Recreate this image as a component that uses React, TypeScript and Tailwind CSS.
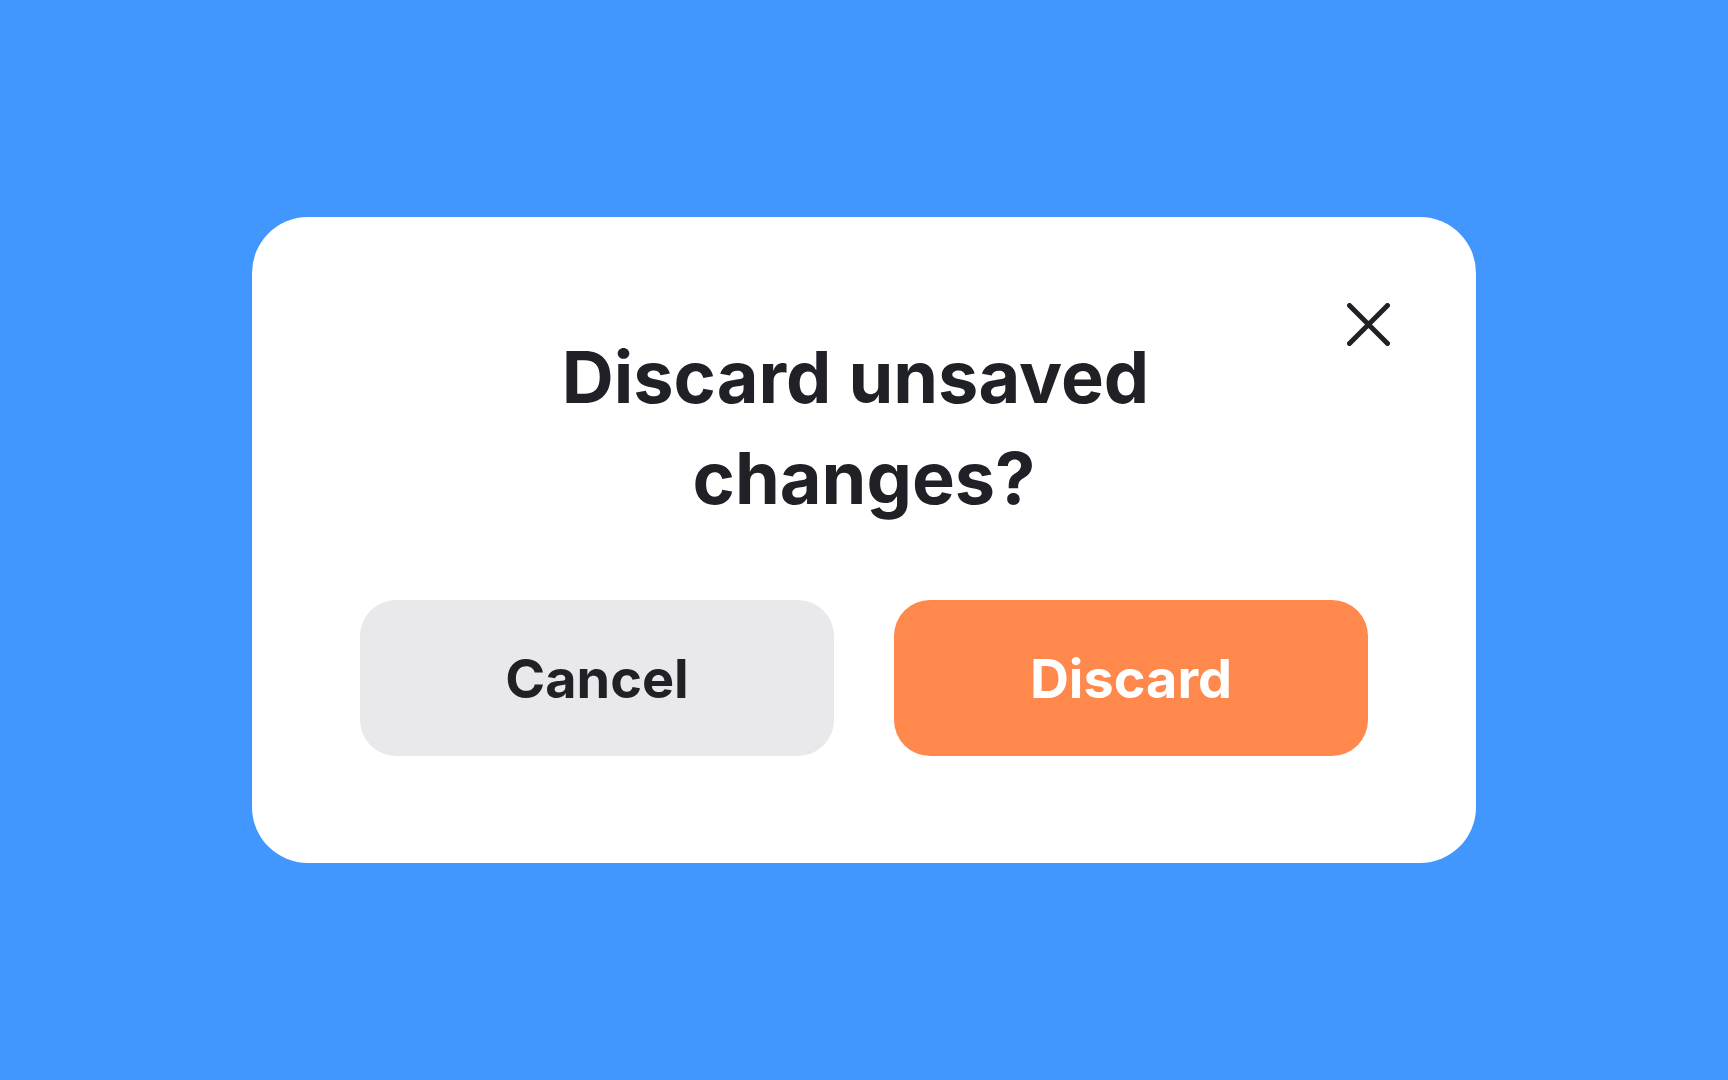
import { useState } from 'react';

export default function App() {
  const [open, setOpen] = useState(true);

  return (
    <div className="h-screen w-full bg-[#4297ff] flex items-center justify-center font-['Inter','Liberation_Sans',sans-serif]">
      {open && (
        <div className="relative w-[1224px] bg-white rounded-[56px] pt-[110px] pb-[107px] px-[108px] flex flex-col items-center">
          {/* close */}
          <button
            onClick={() => setOpen(false)}
            className="absolute top-[86px] right-[86px] w-[43px] h-[43px] flex items-center justify-center"
          >
            <svg width="43" height="43" viewBox="0 0 43 43" fill="none">
              <path d="M2.5 2.5L40.5 40.5M40.5 2.5L2.5 40.5" stroke="#202027" strokeWidth="5" strokeLinecap="round" />
            </svg>
          </button>

          <h1 className="max-w-[640px] text-center text-[72px] leading-[1.4] font-bold text-[#202027] whitespace-break-spaces">
            Discard unsaved changes?
          </h1>

          {/* actions */}
          <div className="mt-[72px] w-full grid grid-cols-2 gap-[60px]">
            <button className="h-[156px] rounded-[36px] bg-[#e9e9eb] text-[#202027] text-[54px] font-bold">
              Cancel
            </button>
            <button className="h-[156px] rounded-[36px] bg-[#ff884d] text-white text-[54px] font-bold">
              Discard
            </button>
          </div>
        </div>
      )}
    </div>
  );
}
